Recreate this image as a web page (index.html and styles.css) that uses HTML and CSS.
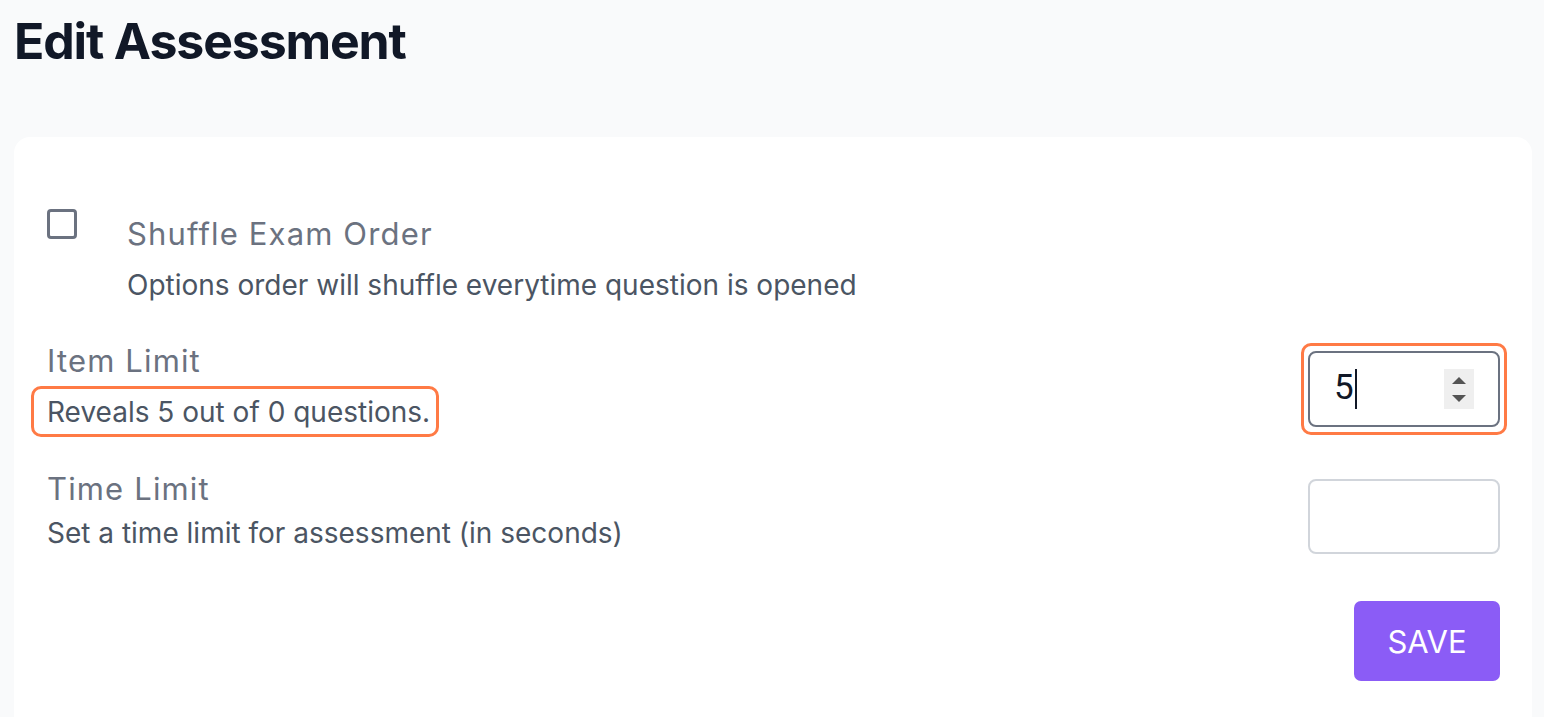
FILE: index.html
```html
<!DOCTYPE html>
<html>
<head>
<meta charset="utf-8">
<link rel="stylesheet" href="styles.css">
</head>
<body>
<h1 class="title">Edit Assessment</h1>
<div class="card">
  <div class="row shuffle">
    <span class="checkbox"></span>
    <div class="text">
      <div class="label">Shuffle Exam Order</div>
      <div class="desc">Options order will shuffle everytime question is opened</div>
    </div>
  </div>
  <div class="row field item-row">
    <div class="text">
      <div class="label">Item Limit</div>
      <div class="desc highlight">Reveals 5 out of 0 questions.</div>
    </div>
    <div class="focus-ring">
      <div class="num-input">
        <span class="value">5</span><span class="caret"></span>
        <span class="spin">
          <svg width="30" height="40" viewBox="0 0 30 40"><rect width="30" height="40" fill="#efefef"/><path d="M8 15 L15 8 L22 15 Z" fill="#545454"/><path d="M8 26 L15 33 L22 26 Z" fill="#545454"/></svg>
        </span>
      </div>
    </div>
  </div>
  <div class="row field time-row">
    <div class="text">
      <div class="label">Time Limit</div>
      <div class="desc tight">Set a time limit for assessment (in seconds)</div>
    </div>
    <div class="plain-input"></div>
  </div>
  <div class="actions">
    <button class="save">SAVE</button>
  </div>
</div>
</body>
</html>
```
FILE: styles.css
```css
html, body {
  margin: 0;
  padding: 0;
  background: #f9fafb;
  font-family: Inter, "Noto Sans", sans-serif;
}
body {
  padding: 0 12px 0 14px;
}
.title {
  margin: 0;
  padding-top: 11px;
  font-size: 50px;
  line-height: 60px;
  font-weight: 700;
  color: #111827;
  letter-spacing: -1.15px;
}
.card {
  margin-top: 66px;
  background: #fff;
  border-radius: 16px 16px 0 0;
  padding: 72px 32px 36px 33px;
}
.row {
  display: flex;
  align-items: flex-start;
}
.checkbox {
  width: 30px;
  height: 30px;
  box-sizing: border-box;
  border: 3px solid #6b7280;
  border-radius: 4px;
  flex: none;
}
.shuffle .text {
  margin-left: 50px;
  margin-top: 7px;
}
.label {
  font-size: 31px;
  line-height: 36px;
  color: #6b7280;
  letter-spacing: 1.15px;
}
.desc {
  font-size: 28px;
  line-height: 36px;
  color: #4b5563;
  margin-top: 15px;
}
.desc.tight {
  margin-top: 8px;
}
.field {
  justify-content: space-between;
}
.item-row {
  margin-top: 40px;
}
.time-row {
  margin-top: 34px;
}
.highlight {
  display: inline-block;
  margin-left: -16px;
  padding: 5px 6px 4px 13px;
  border: 3px solid #ff7a45;
  border-radius: 10px;
  margin-top: 7px;
}
.focus-ring {
  border: 3px solid #ff7a45;
  border-radius: 10px;
  padding: 5px 4px;
  margin-right: -7px;
}
.num-input {
  box-sizing: border-box;
  width: 192px;
  height: 76px;
  border: 2px solid #6b7280;
  border-radius: 8px;
  display: flex;
  align-items: center;
  padding-left: 24px;
}
.value {
  font-family: Roboto, Inter, sans-serif;
  font-size: 35px;
  line-height: 40px;
  color: #111827;
  margin-top: -3px;
}
.caret {
  width: 2px;
  height: 40px;
  background: #111827;
  margin-left: 1px;
}
.spin {
  margin-left: auto;
  margin-right: 24px;
  display: flex;
}
.plain-input {
  width: 192px;
  height: 75px;
  box-sizing: border-box;
  border: 2px solid #d1d5db;
  border-radius: 8px;
  margin-top: 8px;
}
.actions {
  display: flex;
  justify-content: flex-end;
  margin-top: 47px;
}
.save {
  width: 146px;
  height: 80px;
  background: #8b5cf6;
  color: #fff;
  border: none;
  border-radius: 7px;
  font-family: Inter, "Noto Sans", sans-serif;
  font-size: 31px;
}
```
